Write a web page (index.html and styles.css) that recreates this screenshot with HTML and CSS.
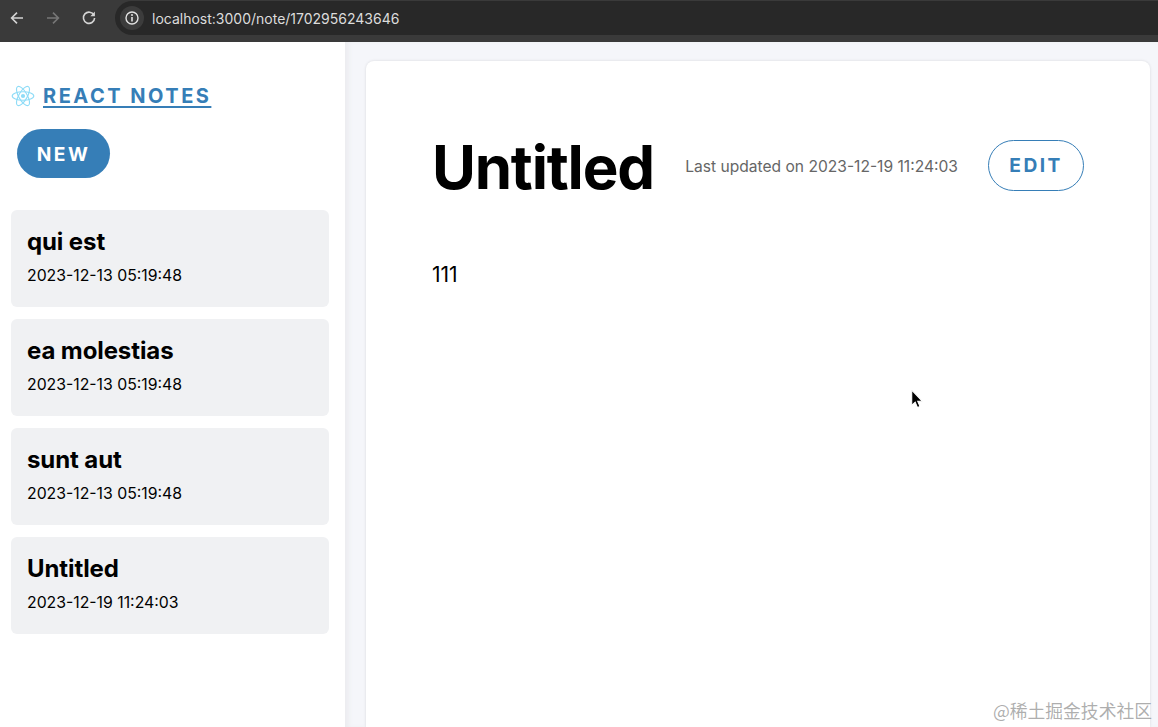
FILE: index.html
```html
<!DOCTYPE html>
<html lang="en">
<head>
<meta charset="utf-8">
<title>React Notes</title>
<link rel="stylesheet" href="styles.css">
</head>
<body>
<header class="browser">
  <div class="nav">
    <svg class="nav-icon" width="16" height="16" viewBox="0 0 16 16"><path d="M14 8H3M8 2.6 2.6 8 8 13.4" fill="none" stroke="#d4d4d4" stroke-width="1.6"/></svg>
    <svg class="nav-icon" width="16" height="16" viewBox="0 0 16 16"><path d="M2 8h11M8 2.6 13.4 8 8 13.4" fill="none" stroke="#777" stroke-width="1.6"/></svg>
    <svg class="nav-icon" width="16" height="16" viewBox="0 0 16 16"><path d="M13 5.2A5.6 5.6 0 1 0 13.6 8" fill="none" stroke="#d4d4d4" stroke-width="1.6"/><path d="M13.9 1.6v4.6H9.3z" fill="#d4d4d4"/></svg>
  </div>
  <div class="address">
    <span class="info"><svg width="16" height="16" viewBox="0 0 16 16"><circle cx="8" cy="8" r="6" fill="none" stroke="#e2e2e2" stroke-width="1.4"/><path d="M8 7v4.4" stroke="#e2e2e2" stroke-width="1.6"/><circle cx="8" cy="5" r="1" fill="#e2e2e2"/></svg></span>
    <span class="url">localhost:3000/note/1702956243646</span>
  </div>
</header>
<div class="app">
  <aside class="sidebar">
    <a class="brand" href="#">
      <svg class="logo" width="24" height="22" viewBox="-12 -11 24 22"><g fill="none" stroke="#8fdcf7" stroke-width="1.1"><ellipse rx="10.8" ry="4.2"/><ellipse rx="10.8" ry="4.2" transform="rotate(60)"/><ellipse rx="10.8" ry="4.2" transform="rotate(120)"/></g><circle r="2.1" fill="#8fdcf7"/></svg>
      <span class="brand-text">REACT NOTES</span>
    </a>
    <button class="btn-new">NEW</button>
    <ul class="notes">
      <li class="note"><h3>qui est</h3><small>2023-12-13 05:19:48</small></li>
      <li class="note"><h3>ea molestias</h3><small>2023-12-13 05:19:48</small></li>
      <li class="note"><h3>sunt aut</h3><small>2023-12-13 05:19:48</small></li>
      <li class="note"><h3>Untitled</h3><small>2023-12-19 11:24:03</small></li>
    </ul>
  </aside>
  <main class="main">
    <section class="card">
      <div class="note-head">
        <h1>Untitled</h1>
        <div class="meta">
          <span class="updated">Last updated on 2023-12-19 11:24:03</span>
          <button class="btn-edit">EDIT</button>
        </div>
      </div>
      <p class="body-text">111</p>
    </section>
  </main>
</div>
<svg class="cursor" width="15" height="21" viewBox="0 0 14 20"><path d="M1.5 1v14.5l3.3-3 2.2 5.2 2.4-1-2.2-5h4.5z" fill="#000" stroke="#fff" stroke-width="1"/></svg>
<div class="watermark">@稀土掘金技术社区</div>
</body>
</html>
```
FILE: styles.css
```css
* { box-sizing: border-box; }
html, body { height: 100%; }
body {
  margin: 0;
  height: 727px;
  overflow: hidden;
  display: flex;
  flex-direction: column;
  font-family: Inter, "Noto Sans", sans-serif;
  color: #000;
  background: #f5f6fa;
}
.browser {
  flex: 0 0 42px;
  display: flex;
  gap: 18px;
  padding: 1px 0 7px 9px;
  background: #3a3a3a;
}
.nav { display: flex; align-items: center; gap: 20px; }
.nav-icon { display: block; }
.address {
  flex: 1;
  display: flex;
  align-items: center;
  gap: 8px;
  padding-left: 5px;
  background: #282828;
  border-radius: 17px 0 0 17px;
}
.info {
  width: 24px;
  height: 24px;
  display: flex;
  align-items: center;
  justify-content: center;
  border-radius: 50%;
  background: #3c3c3c;
}
.info svg { display: block; }
.url { font-size: 14px; color: #dcdcdc; }
.app { flex: 1; display: flex; min-height: 0; }
.sidebar {
  flex: 0 0 345px;
  background: #fff;
  padding: 42px 16px 0 11px;
}
.brand {
  display: flex;
  align-items: center;
  gap: 8px;
  height: 24px;
  color: #367eb7;
  text-decoration: none;
}
.logo { display: block; flex: none; }
.brand-text {
  font-size: 20px;
  font-weight: 700;
  letter-spacing: 2.5px;
  line-height: 24px;
  text-decoration: underline;
  text-underline-offset: 3px;
}
.btn-new {
  display: block;
  width: 93px;
  height: 49px;
  margin: 21px 0 32px 6px;
  border: 0;
  border-radius: 25px;
  background: #367eb7;
  color: #fff;
  font: 700 19.2px Inter, sans-serif;
  letter-spacing: 2.4px;
}
.notes { margin: 0; padding: 0; list-style: none; display: flex; flex-direction: column; gap: 12px; }
.note {
  height: 97px;
  padding: 17px 16px 0;
  background: #f0f1f3;
  border-radius: 6px;
}
.note h3 { margin: 0; font-size: 24px; line-height: 30px; font-weight: 700; letter-spacing: -.1px; }
.note small { display: block; margin-top: 9px; font-size: 15.8px; line-height: 20px; }
.main {
  flex: 1;
  padding: 19px 8px 0 21px;
  box-shadow: inset 5px 0 4px -1px #ecedf0;
}
.card {
  height: 100%;
  padding: 68px 66px 0;
  background: #fff;
  border-radius: 8px 8px 0 0;
  box-shadow: 0 0 3px rgba(0, 0, 0, .12);
}
.note-head { display: flex; align-items: center; justify-content: space-between; }
.note-head h1 { margin: 0 0 -2px; padding-top: 2px; font-size: 60px; line-height: 72px; font-weight: 700; letter-spacing: -1.2px; }
.meta { display: flex; align-items: center; gap: 30px; }
.updated { padding-top: 2px; font-size: 15.6px; color: #666; }
.btn-edit {
  width: 96px;
  height: 51px;
  border: 1px solid #367eb7;
  border-radius: 26px;
  background: #fff;
  color: #367eb7;
  font: 700 19.2px Inter, sans-serif;
  letter-spacing: 2.4px;
}
.body-text { margin: 0; padding-top: 59px; font-size: 21px; line-height: 30px; }
.cursor { position: absolute; left: 910px; top: 389px; }
.watermark {
  position: absolute;
  right: 6px;
  bottom: 4px;
  font: 17.8px "Noto Sans CJK SC", sans-serif;
  color: rgba(120, 120, 120, .6);
}
```
